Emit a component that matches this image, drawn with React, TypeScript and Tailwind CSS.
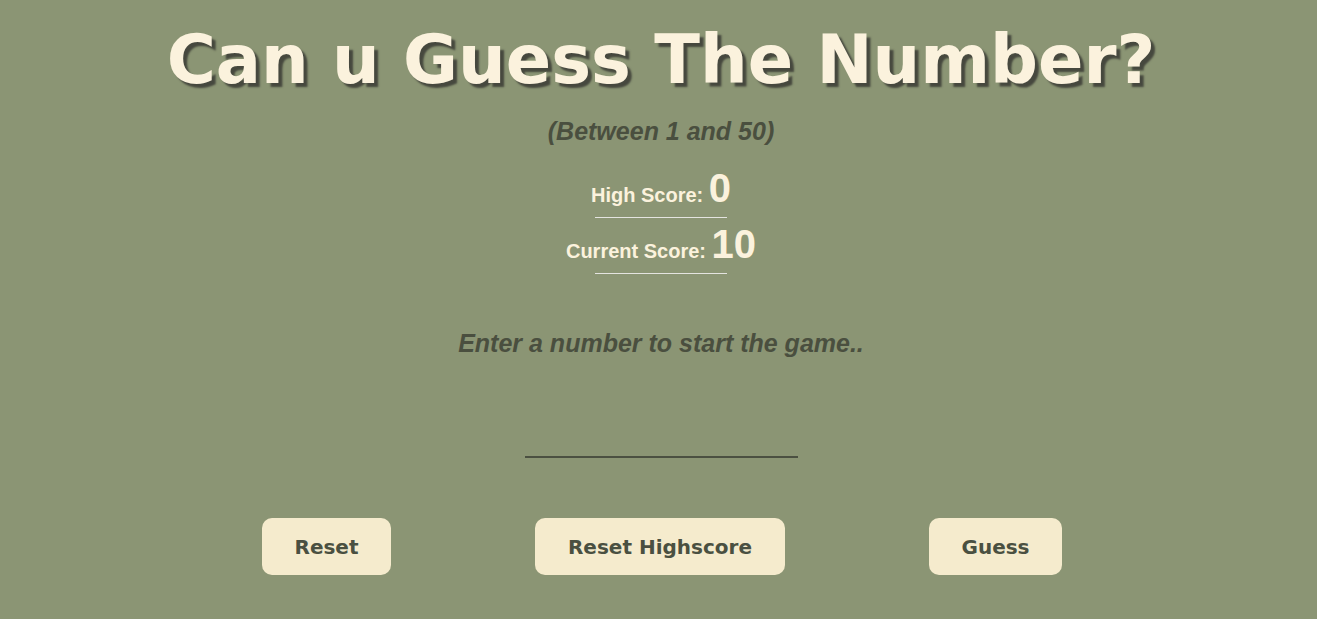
export default function App() {
  const arial = "font-['Liberation_Sans',Arial,sans-serif]";
  const verdana = "font-['DejaVu_Sans',Verdana,sans-serif]";

  return (
    <div className="min-h-[619px] w-full bg-[#8b9574]">
      <main className="flex flex-col items-center pl-[5px]">
        <h1
          className={`${verdana} mt-[21px] text-[67px] font-bold leading-[78px] text-[#fbf2dd] [text-shadow:4px_4px_2px_#46483e]`}
        >
          Can u Guess The Number?
        </h1>

        <p className={`${arial} mt-[18px] text-[25px] font-bold italic leading-[29px] text-[#4a4f3f]`}>
          (Between 1 and 50)
        </p>

        <div className={`${arial} mt-[19px] flex flex-col items-center text-[#fbf2dd]`}>
          <div className="text-[20px] font-bold leading-none">
            High Score: <span className="text-[40px] leading-[46px]">0</span>
          </div>
          <div className="mt-[6px] h-px w-[132px] bg-[#e4e4e0]" />
          <div className="mt-[3px] text-[20px] font-bold leading-none">
            Current Score: <span className="text-[40px] leading-[46px]">10</span>
          </div>
          <div className="mt-[6px] h-px w-[132px] bg-[#e4e4e0]" />
        </div>

        <p className={`${arial} mt-[55px] text-[25px] font-bold italic leading-[29px] text-[#4a4f3f]`}>
          Enter a number to start the game..
        </p>

        <input
          type="number"
          className={`${arial} mt-[71px] h-[29px] w-[273px] border-b-2 border-[#4b5041] bg-transparent text-center text-[20px] outline-none`}
        />

        <div className={`${verdana} mt-[60px] flex items-center justify-center gap-[144px] pl-[2px]`}>
          <button className="h-[57px] w-[129px] rounded-[10px] bg-[#f5ebcd] text-[20px] font-bold text-[#4a5041]">
            Reset
          </button>
          <button className="h-[57px] w-[250px] rounded-[10px] bg-[#f5ebcd] text-[20px] font-bold text-[#4a5041]">
            Reset Highscore
          </button>
          <button className="h-[57px] w-[133px] rounded-[10px] bg-[#f5ebcd] text-[20px] font-bold text-[#4a5041]">
            Guess
          </button>
        </div>
      </main>
    </div>
  );
}
